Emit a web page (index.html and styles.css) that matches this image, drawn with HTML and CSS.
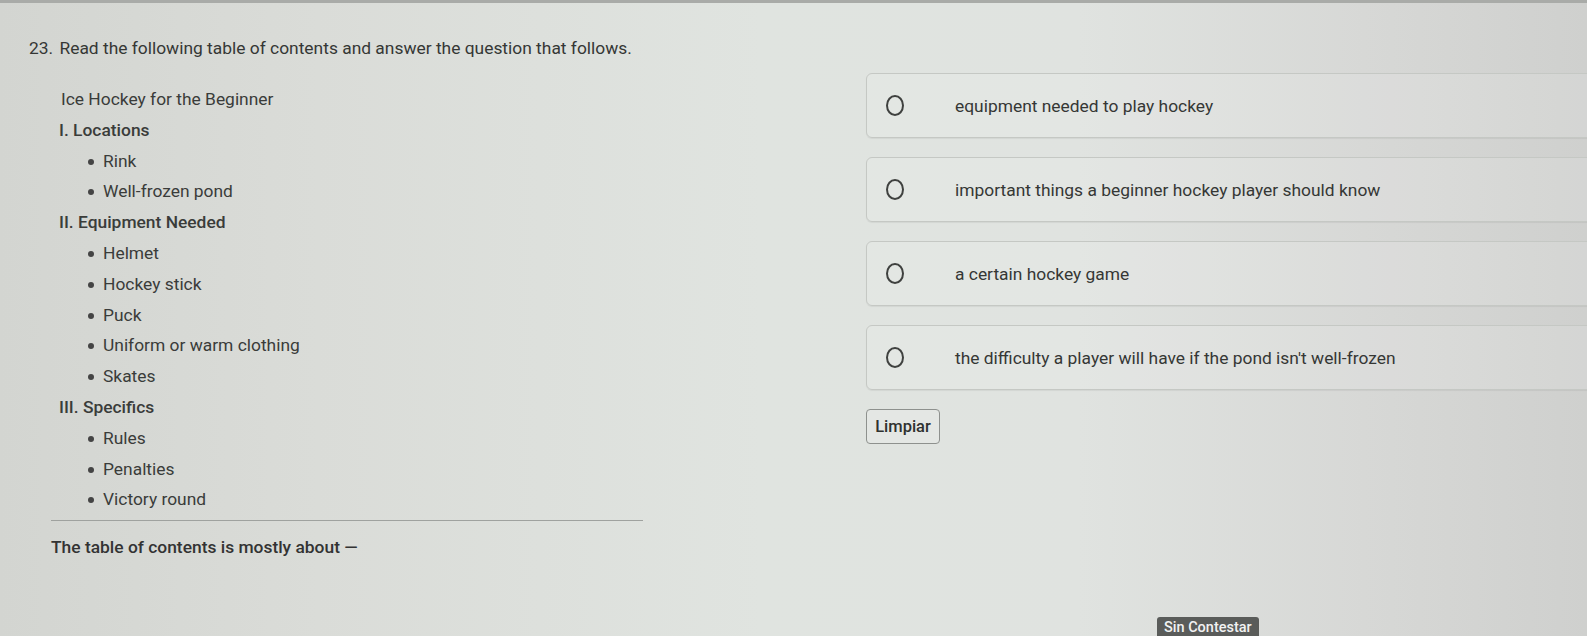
FILE: index.html
```html
<!DOCTYPE html>
<html lang="en">
<head>
  <meta charset="UTF-8" />
  <title>Pregunta 23</title>
  <link rel="stylesheet" href="styles.css">
</head>
<body>

<div class="page">
  <div class="question-title">
    <span class="num">23.</span> Read the following table of contents and answer the question that follows.
  </div>

  <div class="question-body">
    <!-- passage -->
    <div class="passage">
      <div class="toc">
        <div class="toc-title">Ice Hockey for the Beginner</div>
        <div class="toc-head">I. Locations</div>
        <ul>
          <li>Rink</li>
          <li>Well-frozen pond</li>
        </ul>
        <div class="toc-head">II. Equipment Needed</div>
        <ul>
          <li>Helmet</li>
          <li>Hockey stick</li>
          <li>Puck</li>
          <li>Uniform or warm clothing</li>
          <li>Skates</li>
        </ul>
        <div class="toc-head">III. Specifics</div>
        <ul>
          <li>Rules</li>
          <li>Penalties</li>
          <li>Victory round</li>
        </ul>
      </div>
      <div class="prompt">The table of contents is mostly about &mdash;</div>
    </div>

    <!-- answer choices -->
    <div class="choices">
      <label class="choice"><span class="radio"></span><span class="choice-text">equipment needed to play hockey</span></label>
      <label class="choice"><span class="radio"></span><span class="choice-text">important things a beginner hockey player should know</span></label>
      <label class="choice"><span class="radio"></span><span class="choice-text">a certain hockey game</span></label>
      <label class="choice"><span class="radio"></span><span class="choice-text">the difficulty a player will have if the pond isn't well-frozen</span></label>
      <button class="clear-btn">Limpiar</button>
    </div>
  </div>

  <div class="status-bar">
    <span class="status">Sin Contestar</span>
  </div>
</div>

</body>
</html>
```

FILE: styles.css
```css
html, body {
  margin: 0;
  height: 100%;
  overflow: hidden;
}

body {
  font-family: Roboto, "Liberation Sans", sans-serif;
  font-size: 17.4px;
  color: #3a3c3a;
  background: linear-gradient(90deg, #d3d5d1 0%, #dadcd8 20%, #e0e4e0 48%, #e0e3e0 68%, #d7d8d6 86%, #cfd0ce 100%);
  border-top: 3px solid #a9aba8;
  box-sizing: border-box;
}

.page {
  display: flex;
  flex-direction: column;
  height: 633px;
}

.question-title {
  padding: 35px 0 0 29px;
  line-height: 20px;
  color: #353735;
}

.question-title .num {
  margin-right: 2px;
}

.question-body {
  display: flex;
  align-items: flex-start;
  margin-top: 15px;
}

.passage {
  width: 592px;
  margin-left: 51px;
  padding-top: 11px;
}

.toc {
  padding-left: 10px;
  padding-bottom: 5px;
  border-bottom: 1px solid #9fa29f;
  line-height: 30.8px;
}

.toc-head {
  font-weight: 500;
  margin-left: -2px;
}

.toc ul {
  margin: 0;
  padding-left: 42px;
}

.toc li {
  list-style: none;
  position: relative;
}

.toc li::before {
  content: "";
  position: absolute;
  left: -15px;
  top: 13px;
  width: 6px;
  height: 6px;
  border-radius: 50%;
  background: #444;
}

.prompt {
  font-weight: 500;
  margin-top: 16px;
  line-height: 20px;
  color: #333;
}

.choices {
  flex: 1;
  margin-left: 223px;
  margin-right: -20px;
}

.choice {
  display: flex;
  align-items: center;
  height: 65px;
  box-sizing: border-box;
  margin-bottom: 19px;
  border: 1px solid #c5c8c4;
  border-radius: 6px;
  background: rgba(255, 255, 255, 0.12);
  box-shadow: 0 1px 1px rgba(0, 0, 0, 0.06);
}

.radio {
  width: 14px;
  height: 17px;
  margin-left: 19px;
  border: 2px solid #3f413f;
  border-radius: 50%;
}

.choice-text {
  margin-left: 51px;
  color: #353735;
}

.clear-btn {
  font-family: Roboto, "Liberation Sans", sans-serif;
  font-size: 16.5px;
  font-weight: 500;
  color: #2f312f;
  height: 35px;
  width: 74px;
  padding: 0;
  border: 1px solid #8e918e;
  border-radius: 4px;
  background: #e4e7e4;
}

.status-bar {
  margin-top: auto;
  padding-left: 1157px;
}

.status {
  display: inline-block;
  height: 17px;
  padding: 2px 7px 0;
  background: #5a5c5a;
  color: #f2f2f2;
  font-size: 14.5px;
  font-weight: 500;
  border-radius: 3px 3px 0 0;
}
```
